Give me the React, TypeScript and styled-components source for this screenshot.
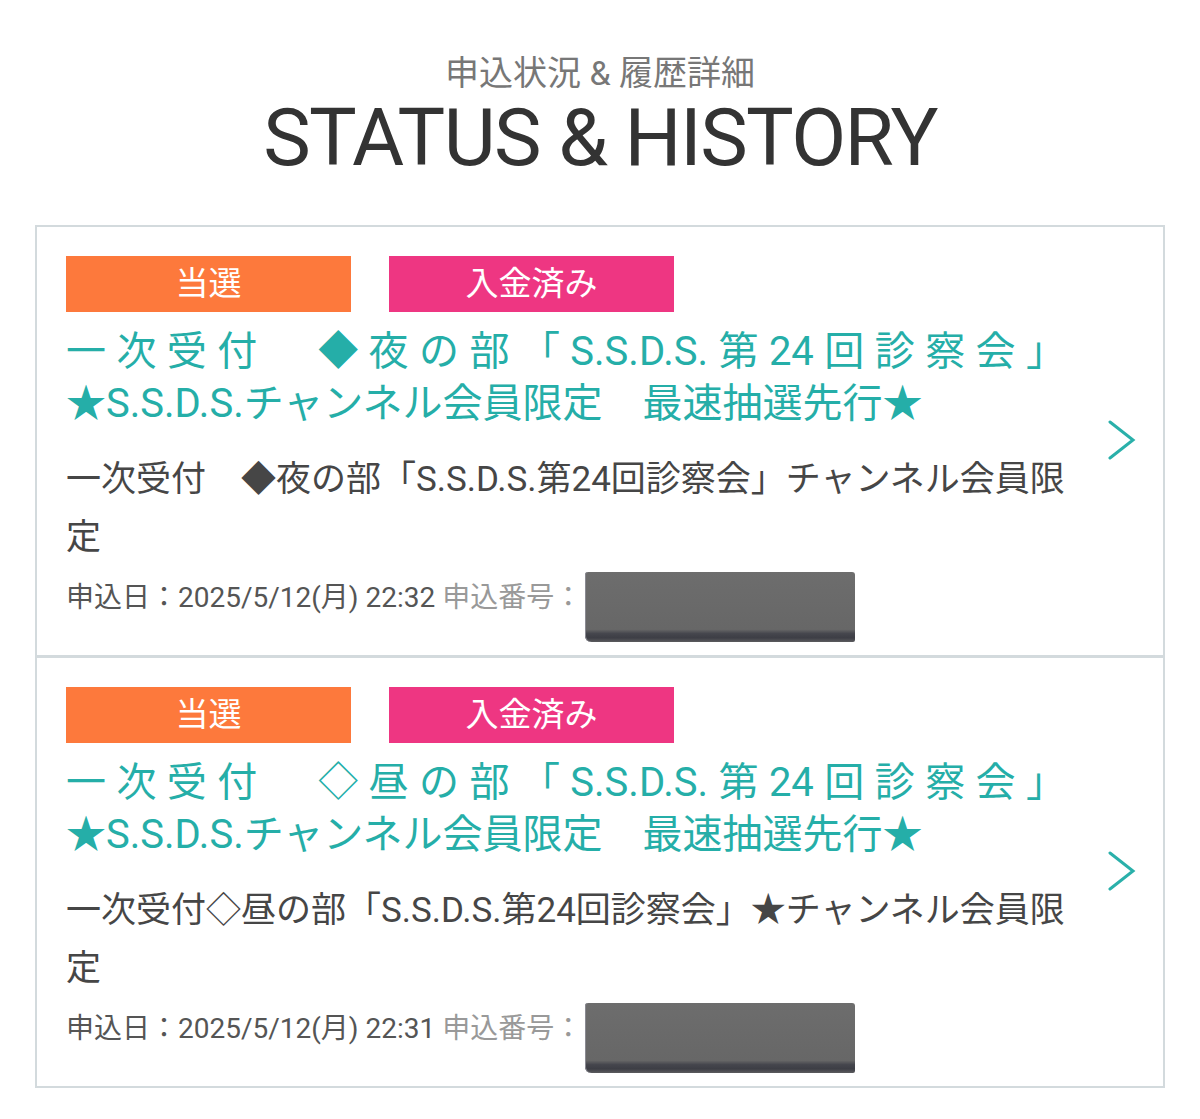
import React from "react";
import styled, { createGlobalStyle } from "styled-components";

const Global = createGlobalStyle`
  html, body { margin: 0; padding: 0; background: #ffffff; }
  body { font-family: Roboto, "Noto Sans CJK JP", sans-serif; }
`;

const Page = styled.div`
  width: 1200px;
  padding-top: 53px;
  box-sizing: border-box;
`;

const Header = styled.header`
  display: flex;
  flex-direction: column;
  align-items: center;
`;

const SubTitle = styled.div`
  font-size: 34px;
  line-height: 40px;
  color: #777777;
`;

const MainTitle = styled.h1`
  margin: 0;
  font-family: Roboto, "Liberation Sans", sans-serif;
  font-weight: 400;
  font-size: 80px;
  line-height: 90px;
  letter-spacing: -1.6px;
  color: #333333;
`;

const List = styled.div`
  margin: 42px 0 0 35px;
  width: 1130px;
  box-sizing: border-box;
  border: 2px solid #d3dadd;
`;

const Card = styled.div`
  display: flex;
  align-items: center;
  padding: 29px 0 13px 29px;
  & + & {
    border-top: 3px solid #d3dadd;
  }
`;

const Content = styled.div`
  flex: 0 0 1000px;
  width: 1000px;
`;

const Badges = styled.div`
  display: flex;
  gap: 38px;
`;

const Badge = styled.div<{ $bg: string }>`
  width: 285px;
  height: 56px;
  background: ${(p) => p.$bg};
  color: #ffffff;
  font-size: 33px;
  line-height: 56px;
  text-align: center;
`;

const Title = styled.div`
  margin-top: 14px;
  color: #25aea8;
  font-size: 40px;
  line-height: 52px;
`;

const TitleLine = styled.span<{ $justify?: boolean }>`
  display: block;
  white-space: nowrap;
  text-align: ${(p) => (p.$justify ? "justify" : "left")};
  text-align-last: ${(p) => (p.$justify ? "justify" : "left")};
`;

const Desc = styled.div`
  margin-top: 21px;
  color: #464646;
  font-size: 35px;
  line-height: 58px;
`;

const Meta = styled.div`
  margin-top: 5px;
  display: flex;
  align-items: flex-start;
`;

const MetaText = styled.span`
  font-size: 28px;
  line-height: 52px;
  color: #555555;
  white-space: pre;
`;

const MetaLabel = styled.span`
  color: #999999;
`;

const Redacted = styled.div`
  margin-left: 3px;
  width: 270px;
  height: 70px;
  border-radius: 3px 3px 2px 6px;
  background: linear-gradient(
    to bottom,
    #6d6d6d 0%,
    #676767 82%,
    #45464d 88%,
    #3d3e45 94%,
    #5b5b5e 100%
  );
  box-shadow: inset 1px 0 0 #8a8a92;
`;

const ArrowCell = styled.div`
  flex: 1;
  display: flex;
  padding-left: 41px;
  margin-bottom: 18px;
`;

const Chevron = () => (
  <svg width="30" height="40" viewBox="0 0 30 40" aria-hidden="true">
    <polyline
      points="3,2 26,20 3,38"
      fill="none"
      stroke="#2ab0aa"
      strokeWidth="3"
      strokeLinecap="round"
      strokeLinejoin="miter"
    />
  </svg>
);

type Entry = {
  titleA: string;
  titleB: string;
  desc: string;
  date: string;
};

const entries: Entry[] = [
  {
    titleA: "一次受付　◆夜の部「S.S.D.S.第24回診察会」",
    titleB: "★S.S.D.S.チャンネル会員限定　最速抽選先行★",
    desc: "一次受付　◆夜の部「S.S.D.S.第24回診察会」チャンネル会員限定",
    date: "2025/5/12(月) 22:32",
  },
  {
    titleA: "一次受付　◇昼の部「S.S.D.S.第24回診察会」",
    titleB: "★S.S.D.S.チャンネル会員限定　最速抽選先行★",
    desc: "一次受付◇昼の部「S.S.D.S.第24回診察会」★チャンネル会員限定",
    date: "2025/5/12(月) 22:31",
  },
];

export default function App() {
  return (
    <Page lang="ja">
      <Global />
      <Header>
        <SubTitle>申込状況 &amp; 履歴詳細</SubTitle>
        <MainTitle>STATUS &amp; HISTORY</MainTitle>
      </Header>
      <List>
        {entries.map((e, i) => (
          <Card key={i}>
            <Content>
              <Badges>
                <Badge $bg="#fd793c">当選</Badge>
                <Badge $bg="#ee3682">入金済み</Badge>
              </Badges>
              <Title>
                <TitleLine $justify>{e.titleA}</TitleLine>
                <TitleLine>{e.titleB}</TitleLine>
              </Title>
              <Desc>{e.desc}</Desc>
              <Meta>
                <MetaText>
                  申込日：{e.date} <MetaLabel>申込番号：</MetaLabel>
                </MetaText>
                <Redacted />
              </Meta>
            </Content>
            <ArrowCell>
              <Chevron />
            </ArrowCell>
          </Card>
        ))}
      </List>
    </Page>
  );
}
